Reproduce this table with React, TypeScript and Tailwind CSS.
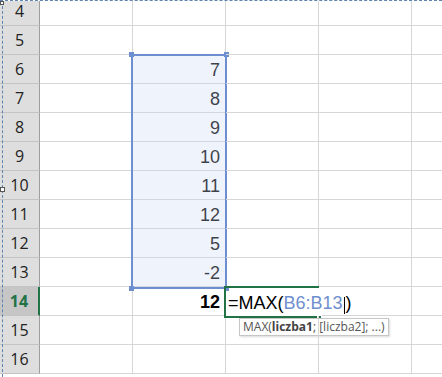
import React from 'react';

const rows: { n: number; b?: string; bold?: boolean }[] = [
  { n: 4 },
  { n: 5 },
  { n: 6, b: '7' },
  { n: 7, b: '8' },
  { n: 8, b: '9' },
  { n: 9, b: '10' },
  { n: 10, b: '11' },
  { n: 11, b: '12' },
  { n: 12, b: '5' },
  { n: 13, b: '-2' },
  { n: 14, b: '12', bold: true },
  { n: 15 },
  { n: 16 },
];

const ACTIVE_ROW = 14;
const RANGE_START = 6;

// blue range frame over B6:B13 with its four corner handles
function RangeFrame() {
  return (
    <div className="pointer-events-none absolute -left-[2px] -top-[1px] z-10 h-[235px] w-[96px] border-2 border-[#6e8fcf] bg-[#c9d8f5]/30">
      <div className="absolute -left-[4px] -top-[4px] h-[5px] w-[5px] bg-[#6e8fcf]" />
      <div className="absolute -right-[4px] -top-[4px] h-[5px] w-[5px] bg-[#6e8fcf]" />
      <div className="absolute -bottom-[4px] -left-[4px] h-[5px] w-[5px] bg-[#6e8fcf]" />
      <div className="absolute -bottom-[4px] -right-[4px] h-[5px] w-[5px] bg-[#6e8fcf]" />
    </div>
  );
}

export default function App() {
  return (
    <div className="relative h-[377px] w-[442px] overflow-hidden border-t border-dashed border-[#5e84b0] bg-white font-['Liberation_Sans',Arial,sans-serif]">
      <div className="-mt-[4px] flex flex-col">
        {rows.map((row) => {
          const active = row.n === ACTIVE_ROW;
          return (
            <div key={row.n} className="flex h-[29px] shrink-0">
              <div
                className={`flex w-[40px] shrink-0 items-center justify-center border-b border-[#c4c4c4] font-['Open_Sans',sans-serif] text-[16px] ${
                  active
                    ? 'border-r-2 border-r-[#217346] bg-[#c6c6c6] font-bold text-[#217346]'
                    : 'border-r border-r-[#9e9e9e] bg-[#dedede] text-[#222]'
                }`}
              >
                {row.n}
              </div>
              <div className="w-[93px] shrink-0 border-b border-r border-[#d6d6d6]" />
              <div
                className={`relative flex w-[93px] shrink-0 items-end justify-end border-b border-r border-[#d6d6d6] pb-[3px] pr-[5px] text-[18px] leading-[20px] text-black ${
                  row.bold ? 'font-bold' : ''
                }`}
              >
                {row.n === RANGE_START && <RangeFrame />}
                {row.b}
              </div>
              <div
                className={`relative z-20 flex w-[93px] shrink-0 items-end ${
                  active
                    ? '-ml-[2px] -mt-[1px] h-[32px] w-[95px] border-y-2 border-l-2 border-[#217346] pb-[3px] pl-[2px]'
                    : 'border-b border-r border-[#d6d6d6]'
                }`}
              >
                {active && (
                  <>
                    <span className="flex items-end whitespace-nowrap text-[18px] leading-[20px] text-black">
                      =MAX(<span className="text-[#6f8fcf]">B6:B13</span>
                      <span className="mx-[1px] mb-[-1px] inline-block h-[17px] w-px bg-black" />)
                    </span>
                    <div className="absolute -bottom-[4px] -right-[3px] h-[5px] w-[5px] border border-white bg-[#217346]" />
                    {/* function hint */}
                    <div className="absolute -bottom-[20px] left-[13px] flex h-[18px] items-center whitespace-nowrap border border-[#c6c6c6] bg-white px-[3px] font-['Open_Sans',sans-serif] text-[12px] leading-none text-[#555] shadow-[1px_1px_2px_rgba(0,0,0,0.15)]">
                      MAX(<b className="font-bold text-[#444]">liczba1</b>; [liczba2]; ...)
                    </div>
                  </>
                )}
              </div>
              <div className="w-[93px] shrink-0 border-b border-r border-[#d6d6d6]" />
              <div className="flex-1 border-b border-[#d6d6d6]" />
            </div>
          );
        })}
      </div>

      {/* marquee frame: left edge and grab handles */}
      <div className="absolute bottom-0 left-[2px] top-0 z-30 border-l border-dashed border-[#5e84b0]" />
      <div className="absolute left-0 top-0 z-30 h-[4px] w-[4px] border border-[#555] bg-white" />
      <div className="absolute left-0 top-[186px] z-30 h-[5px] w-[5px] border border-[#555] bg-white" />
    </div>
  );
}
